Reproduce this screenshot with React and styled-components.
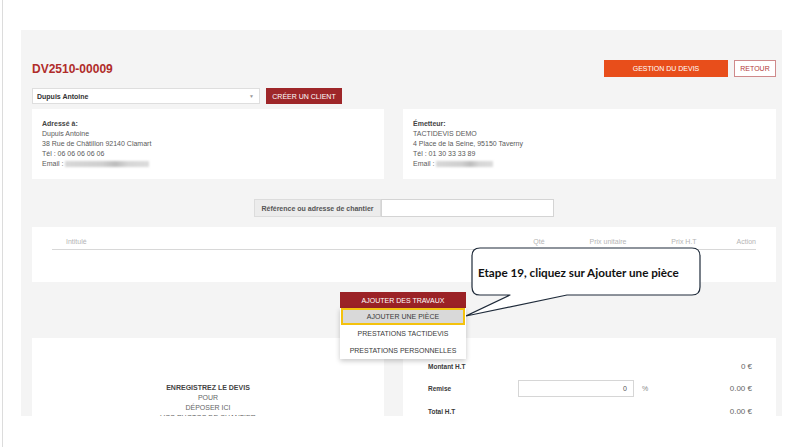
import React from "react";
import styled, { createGlobalStyle } from "styled-components";

const GlobalStyle = createGlobalStyle`
  body {
    margin: 0;
    background: #ffffff;
    font-family: "Liberation Sans", Arial, sans-serif;
  }
  * {
    box-sizing: border-box;
  }
`;

const Screen = styled.div`
  position: relative;
  width: 800px;
  height: 447px;
  overflow: hidden;
`;

const Page = styled.div`
  margin-left: 2px;
  height: 447px;
  border-left: 1px solid #dcdcdc;
  padding: 30px 18px 0 18px;
`;

const Panel = styled.div`
  height: 386px;
  overflow: hidden;
  background: #f4f4f4;
  padding: 30px 6px 0 11px;
`;

const Header = styled.div`
  display: flex;
  align-items: center;
  height: 17px;
`;

const Title = styled.h1`
  flex: 1;
  margin: 0;
  font-size: 12px;
  font-weight: 700;
  color: #b02c2a;
`;

const Button = styled.button`
  display: flex;
  align-items: center;
  justify-content: center;
  height: ${(p) => p.$h || 17}px;
  width: ${(p) => p.$w}px;
  padding: 0;
  margin-left: ${(p) => p.$ml || 0}px;
  font-family: inherit;
  font-size: 7px;
  text-transform: uppercase;
  color: ${(p) => (p.$outline ? "#b2393a" : "#ffffff")};
  background: ${(p) => (p.$outline ? "#ffffff" : p.$bg)};
  border: 1px solid ${(p) => (p.$outline ? "#cf8a8b" : p.$bg)};
  border-radius: 0;
  cursor: pointer;
`;

const ClientRow = styled.div`
  display: flex;
  margin-top: 11px;
  height: 16px;
`;

const Select = styled.div`
  display: flex;
  align-items: center;
  justify-content: space-between;
  width: 228px;
  height: 16px;
  padding: 0 5px 0 4px;
  background: #ffffff;
  border: 1px solid #dedede;
  font-size: 7px;
  font-weight: 700;
  color: #333;
`;

const Caret = styled.span`
  font-size: 5px;
  color: #999;
`;

const TwoCols = styled.div`
  display: grid;
  grid-template-columns: 352px 1fr;
  column-gap: 19px;
  margin-top: ${(p) => p.$mt}px;
`;

const InfoCard = styled.div`
  height: 70px;
  padding: 10px 10px;
  background: #ffffff;
  font-size: 7px;
  line-height: 10px;
  color: #5a5a5a;
`;

const InfoLabel = styled.div`
  font-weight: 700;
  color: #444;
`;

const Blur = styled.span`
  display: inline-block;
  vertical-align: middle;
  width: ${(p) => p.$w}px;
  height: 6px;
  background: linear-gradient(90deg, #d8d8d8 0%, #cfcfcf 45%, #bdbdbd 60%, #d6d6d6 75%, #dcdcdc 100%);
  filter: blur(1px);
`;

const RefRow = styled.div`
  display: flex;
  justify-content: center;
  margin-top: 20px;
  height: 18px;
`;

const RefLabel = styled.div`
  display: flex;
  align-items: center;
  padding: 0 6px;
  white-space: nowrap;
  background: #ececec;
  border: 1px solid #dcdcdc;
  font-size: 7px;
  font-weight: 700;
  color: #555;
`;

const RefInput = styled.div`
  width: 173px;
  background: #ffffff;
  border: 1px solid #d4d4d4;
`;

const TableCard = styled.div`
  margin-top: 10px;
  height: 55px;
  padding: 8px 20px 0;
  background: #ffffff;
`;

const TableHead = styled.div`
  display: grid;
  grid-template-columns: 1fr 50px 88px 64px 40px;
  align-items: center;
  height: 15px;
  padding-bottom: 1px;
  border-bottom: 1px solid #d8d8d8;
  font-size: 7px;
  color: #b5b5b5;
`;

const Th = styled.div`
  text-align: ${(p) => p.$align || "center"};
  padding-left: ${(p) => p.$pl || 0}px;
`;

const AddRow = styled.div`
  display: flex;
  justify-content: center;
  margin-top: 10px;
  padding-right: 2px;
`;

const AddGroup = styled.div`
  position: relative;
  display: flex;
`;

const Menu = styled.div`
  position: absolute;
  top: 16px;
  left: 0;
  z-index: 5;
  width: 126px;
  padding: 0 1px;
  background: #ffffff;
  box-shadow: 0 2px 5px rgba(0, 0, 0, 0.22);
`;

const MenuItem = styled.div`
  display: flex;
  align-items: center;
  justify-content: center;
  height: 17px;
  font-size: 7px;
  color: #3a3a3a;
  background: ${(p) => (p.$active ? "#d9d9d9" : "transparent")};
  border: 2px solid ${(p) => (p.$active ? "#f4c20d" : "transparent")};
`;

const BottomCard = styled.div`
  height: 100px;
  background: #ffffff;
`;

const SaveNote = styled(BottomCard)`
  padding-top: 45px;
  text-align: center;
  font-size: 7px;
  line-height: 10px;
  color: #666;
`;

const SaveTitle = styled.div`
  font-weight: 700;
  color: #444;
`;

const Totals = styled(BottomCard)`
  display: grid;
  grid-template-columns: 90px 116px 1fr auto;
  grid-auto-rows: 22.5px;
  align-items: center;
  padding: 17px 24px 0 25px;
`;

const TotalLabel = styled.div`
  font-size: 6.5px;
  font-weight: 700;
  color: #3a3a3a;
`;

const TotalValue = styled.div`
  grid-column: 4;
  font-size: 8px;
  color: #666;
  text-align: right;
`;

const NumInput = styled.div`
  display: flex;
  align-items: center;
  justify-content: flex-end;
  height: 17px;
  padding-right: 6px;
  background: #ffffff;
  border: 1px solid #d6d6d6;
  font-size: 7px;
  color: #555;
`;

const Percent = styled.div`
  padding-left: 8px;
  font-size: 7px;
  color: #888;
`;

const Callout = styled.div`
  position: absolute;
  left: 466px;
  top: 247px;
  width: 236px;
  height: 71px;
  z-index: 10;
`;

const CalloutText = styled.div`
  position: absolute;
  left: 12px;
  top: 18px;
  font-family: Lato, "Noto Sans", sans-serif;
  font-size: 11.7px;
  font-weight: 700;
  color: #111;
  white-space: nowrap;
`;

const App = () => {
  return (
    <Screen>
      <GlobalStyle />
      <Page>
        <Panel>
          <Header>
            <Title>DV2510-00009</Title>
            <Button $w={124} $bg="#e84e1b">Gestion du devis</Button>
            <Button $w={42} $ml={6} $outline>Retour</Button>
          </Header>

          <ClientRow>
            <Select>
              <span>Dupuis Antoine</span>
              <Caret>▼</Caret>
            </Select>
            <Button $w={76} $h={16} $ml={6} $bg="#9e2629">Créer un client</Button>
          </ClientRow>

          <TwoCols $mt={5}>
            <InfoCard>
              <InfoLabel>Adressé à:</InfoLabel>
              <div>Dupuis Antoine</div>
              <div>38 Rue de Châtillon 92140 Clamart</div>
              <div>Tél : 06 06 06 06 06</div>
              <div>
                Email : <Blur $w={84} />
              </div>
            </InfoCard>
            <InfoCard>
              <InfoLabel>Émetteur:</InfoLabel>
              <div>TACTIDEVIS DEMO</div>
              <div>4 Place de la Seine, 95150 Taverny</div>
              <div>Tél : 01 30 33 33 89</div>
              <div>
                Email : <Blur $w={57} />
              </div>
            </InfoCard>
          </TwoCols>

          <RefRow>
            <RefLabel>Référence ou adresse de chantier</RefLabel>
            <RefInput />
          </RefRow>

          <TableCard>
            <TableHead>
              <Th $align="left" $pl={14}>Intitulé</Th>
              <Th>Qté</Th>
              <Th>Prix unitaire</Th>
              <Th>Prix H.T</Th>
              <Th $align="right">Action</Th>
            </TableHead>
          </TableCard>

          <AddRow>
            <AddGroup>
              <Button $w={126} $h={16} $bg="#9b2226">Ajouter des travaux</Button>
              <Menu>
                <MenuItem $active>AJOUTER UNE PIÈCE</MenuItem>
                <MenuItem>PRESTATIONS TACTIDEVIS</MenuItem>
                <MenuItem>PRESTATIONS PERSONNELLES</MenuItem>
              </Menu>
            </AddGroup>
          </AddRow>

          <TwoCols $mt={30}>
            <SaveNote>
              <SaveTitle>ENREGISTREZ LE DEVIS</SaveTitle>
              <div>POUR</div>
              <div>DÉPOSER ICI</div>
              <div>VOS PHOTOS DE CHANTIER</div>
            </SaveNote>
            <Totals>
              <TotalLabel>Montant H.T</TotalLabel>
              <TotalValue>0 €</TotalValue>
              <TotalLabel>Remise</TotalLabel>
              <NumInput>0</NumInput>
              <Percent>%</Percent>
              <TotalValue>0.00 €</TotalValue>
              <TotalLabel>Total H.T</TotalLabel>
              <TotalValue>0.00 €</TotalValue>
            </Totals>
          </TwoCols>
        </Panel>
      </Page>

      <Callout>
        <svg width="236" height="71" viewBox="0 0 236 71">
          <path
            d="M 14 1 H 226 Q 234 1 234 9 V 40 Q 234 48 226 48 H 101 L 0 69 L 44 48 H 14 Q 6 48 6 40 V 9 Q 6 1 14 1 Z"
            fill="#ffffff"
            stroke="#1f2b3a"
            strokeWidth="1.2"
            strokeLinejoin="round"
          />
        </svg>
        <CalloutText>Etape 19, cliquez sur Ajouter une pièce</CalloutText>
      </Callout>
    </Screen>
  );
};

export default App;
